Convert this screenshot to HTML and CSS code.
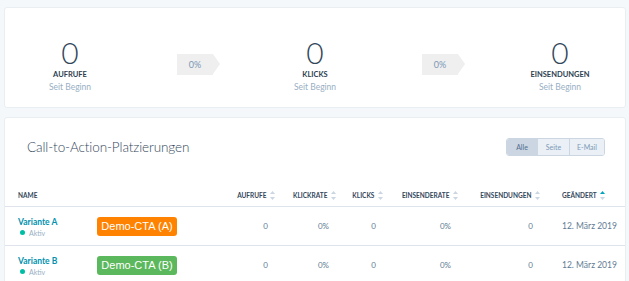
FILE: index.html
```html
<!DOCTYPE html>
<html lang="de">
<head>
  <meta charset="UTF-8">
  <title>CTA Varianten</title>
  <link rel="stylesheet" href="styles.css">
</head>
<body>
  <div class="page">
    <div class="card stats-card">
      <div class="stat">
        <div class="stat-value">0</div>
        <div class="stat-label">Aufrufe</div>
        <div class="stat-sub">Seit Beginn</div>
      </div>
      <div class="rate">0%</div>
      <div class="stat">
        <div class="stat-value">0</div>
        <div class="stat-label">Klicks</div>
        <div class="stat-sub">Seit Beginn</div>
      </div>
      <div class="rate">0%</div>
      <div class="stat">
        <div class="stat-value">0</div>
        <div class="stat-label">Einsendungen</div>
        <div class="stat-sub">Seit Beginn</div>
      </div>
    </div>

    <div class="card table-card">
      <div class="table-head">
        <h2>Call-to-Action-Platzierungen</h2>
        <div class="btn-group">
          <button class="seg active">Alle</button>
          <button class="seg">Seite</button>
          <button class="seg">E-Mail</button>
        </div>
      </div>

      <table class="cta-table">
        <colgroup>
          <col class="c-name"><col class="c-cta"><col class="c-views"><col class="c-rate">
          <col class="c-clicks"><col class="c-srate"><col class="c-subs"><col class="c-date">
        </colgroup>
        <thead>
          <tr>
            <th class="left">Name</th>
            <th></th>
            <th>Aufrufe <svg class="sort" viewBox="0 0 5 9"><path d="M2.5 0L5 3H0z"/><path d="M2.5 9L0 6h5z"/></svg></th>
            <th>Klickrate <svg class="sort" viewBox="0 0 5 9"><path d="M2.5 0L5 3H0z"/><path d="M2.5 9L0 6h5z"/></svg></th>
            <th>Klicks <svg class="sort" viewBox="0 0 5 9"><path d="M2.5 0L5 3H0z"/><path d="M2.5 9L0 6h5z"/></svg></th>
            <th>Einsenderate <svg class="sort" viewBox="0 0 5 9"><path d="M2.5 0L5 3H0z"/><path d="M2.5 9L0 6h5z"/></svg></th>
            <th>Einsendungen <svg class="sort" viewBox="0 0 5 9"><path d="M2.5 0L5 3H0z"/><path d="M2.5 9L0 6h5z"/></svg></th>
            <th class="date">Geändert <svg class="sort sorted" viewBox="0 0 5 9"><path class="on" d="M2.5 0L5 3H0z"/><path d="M2.5 9L0 6h5z"/></svg></th>
          </tr>
        </thead>
        <tbody>
          <tr>
            <td class="left">
              <a class="variant" href="#">Variante A</a>
              <div class="status"><span class="dot"></span>Aktiv</div>
            </td>
            <td class="cta-cell"><span class="cta orange">Demo-CTA (A)</span></td>
            <td class="num">0</td>
            <td class="num">0%</td>
            <td class="num">0</td>
            <td class="num">0%</td>
            <td class="num">0</td>
            <td class="date">12. März 2019</td>
          </tr>
          <tr>
            <td class="left">
              <a class="variant" href="#">Variante B</a>
              <div class="status"><span class="dot"></span>Aktiv</div>
            </td>
            <td class="cta-cell"><span class="cta green">Demo-CTA (B)</span></td>
            <td class="num">0</td>
            <td class="num">0%</td>
            <td class="num">0</td>
            <td class="num">0%</td>
            <td class="num">0</td>
            <td class="date">12. März 2019</td>
          </tr>
        </tbody>
      </table>
    </div>
  </div>
</body>
</html>
```

FILE: styles.css
```css
html, body {
  margin: 0;
  background: #f5f8fa;
  font-family: Lato, 'Open Sans', sans-serif;
  color: #33475b;
}
.page {
  padding: 7px 3px 0 4px;
  height: 281px;
  box-sizing: border-box;
  overflow: hidden;
}
.card {
  background: #fff;
  border: 1px solid #e9eef3;
  border-radius: 3px;
  box-sizing: border-box;
}

/* stats */
.stats-card {
  height: 101px;
  display: flex;
  align-items: flex-start;
  justify-content: space-between;
  padding: 27px 15px 0 15px;
}
.stat {
  width: 100px;
  text-align: center;
}
.stat-value {
  font-size: 30px;
  font-weight: 300;
  line-height: 34px;
}
.stat-label {
  font-size: 7.5px;
  font-weight: 700;
  text-transform: uppercase;
  margin-top: 1px;
  line-height: 10px;
  color: #2d3e50;
}
.stat-sub {
  font-size: 8.5px;
  color: #99afc4;
  line-height: 12px;
  margin-top: 1px;
}
.rate {
  position: relative;
  margin: 19px 7px 0 12px;
  width: 36px;
  height: 21px;
  line-height: 21px;
  background: #efefef;
  color: #7c98b6;
  font-size: 9px;
  text-align: center;
}
.rate::after {
  content: "";
  position: absolute;
  left: 100%;
  top: 0;
  border-left: 7px solid #efefef;
  border-top: 10.5px solid transparent;
  border-bottom: 10.5px solid transparent;
}

/* table card */
.table-card {
  margin-top: 9px;
  height: 200px;
}
.table-head {
  display: flex;
  justify-content: space-between;
  align-items: center;
  padding: 20px 20px 0 22px;
}
.table-head h2 {
  margin: 0;
  font-size: 13.5px;
  font-weight: 300;
  letter-spacing: -0.1px;
  color: #33475b;
}
.btn-group {
  display: flex;
  border: 1px solid #cbd6e2;
  border-radius: 3px;
  overflow: hidden;
  height: 18px;
  box-sizing: border-box;
}
.seg {
  border: none;
  border-left: 1px solid #cbd6e2;
  background: #eaf0f6;
  color: #7c98b6;
  font-family: inherit;
  font-size: 7px;
  padding: 0;
  height: 16px;
  width: 32px;
}
.seg:first-child {
  border-left: none;
  width: 30px;
}
.seg:last-child {
  width: 35px;
}
.seg.active {
  background: #cbd6e2;
  color: #516f90;
}

.cta-table {
  margin-top: 28px;
  width: 100%;
  border-collapse: collapse;
  table-layout: fixed;
}
.c-name { width: 85px; }
.c-cta { width: 135px; }
.c-views { width: 60px; }
.c-rate { width: 61px; }
.c-clicks { width: 47px; }
.c-srate { width: 75px; }
.c-subs { width: 82px; }
.c-date { width: auto; }

.cta-table th {
  font-size: 6.5px;
  font-weight: 700;
  text-transform: uppercase;
  color: #33475b;
  text-align: right;
  padding: 0 10px 0 0;
  height: 22px;
  border-bottom: 1px solid #dfe3eb;
  white-space: nowrap;
  vertical-align: middle;
}
.cta-table th.left { text-align: left; padding-left: 13px; }
.cta-table th.date, .cta-table td.date { text-align: left; padding-left: 12px; }
.sort {
  width: 5px;
  height: 9px;
  margin-left: 2px;
  vertical-align: -2px;
  fill: #cbd6e2;
}
.sort .on { fill: #00a4bd; }

.cta-table td {
  height: 38px;
  border-bottom: 1px solid #dfe3eb;
  font-size: 8px;
  color: #627b94;
  vertical-align: middle;
  padding: 0;
}
.cta-table td.num {
  text-align: right;
  padding-right: 17px;
}
.cta-table td.left { padding-left: 13px; }
.cta-table td.date { font-size: 8.5px; }
.variant {
  color: #0091ae;
  font-size: 8.5px;
  font-weight: 700;
  text-decoration: none;
  display: block;
  line-height: 12px;
}
.status {
  display: flex;
  align-items: center;
  font-size: 7px;
  color: #99afc4;
  margin-top: 1px;
  padding-left: 2px;
}
.dot {
  width: 5px;
  height: 5px;
  border-radius: 50%;
  background: #00bda5;
  margin-right: 4px;
}
.cta-cell { padding-left: 7px !important; }
.cta {
  display: inline-block;
  width: 80px;
  height: 19px;
  line-height: 19px;
  text-align: center;
  border-radius: 3px;
  color: #fff;
  font-family: 'Liberation Sans', Arial, sans-serif;
  font-size: 11px;
}
.cta.orange { background: #ff8300; }
.cta.green { background: #5cb85c; }
```
